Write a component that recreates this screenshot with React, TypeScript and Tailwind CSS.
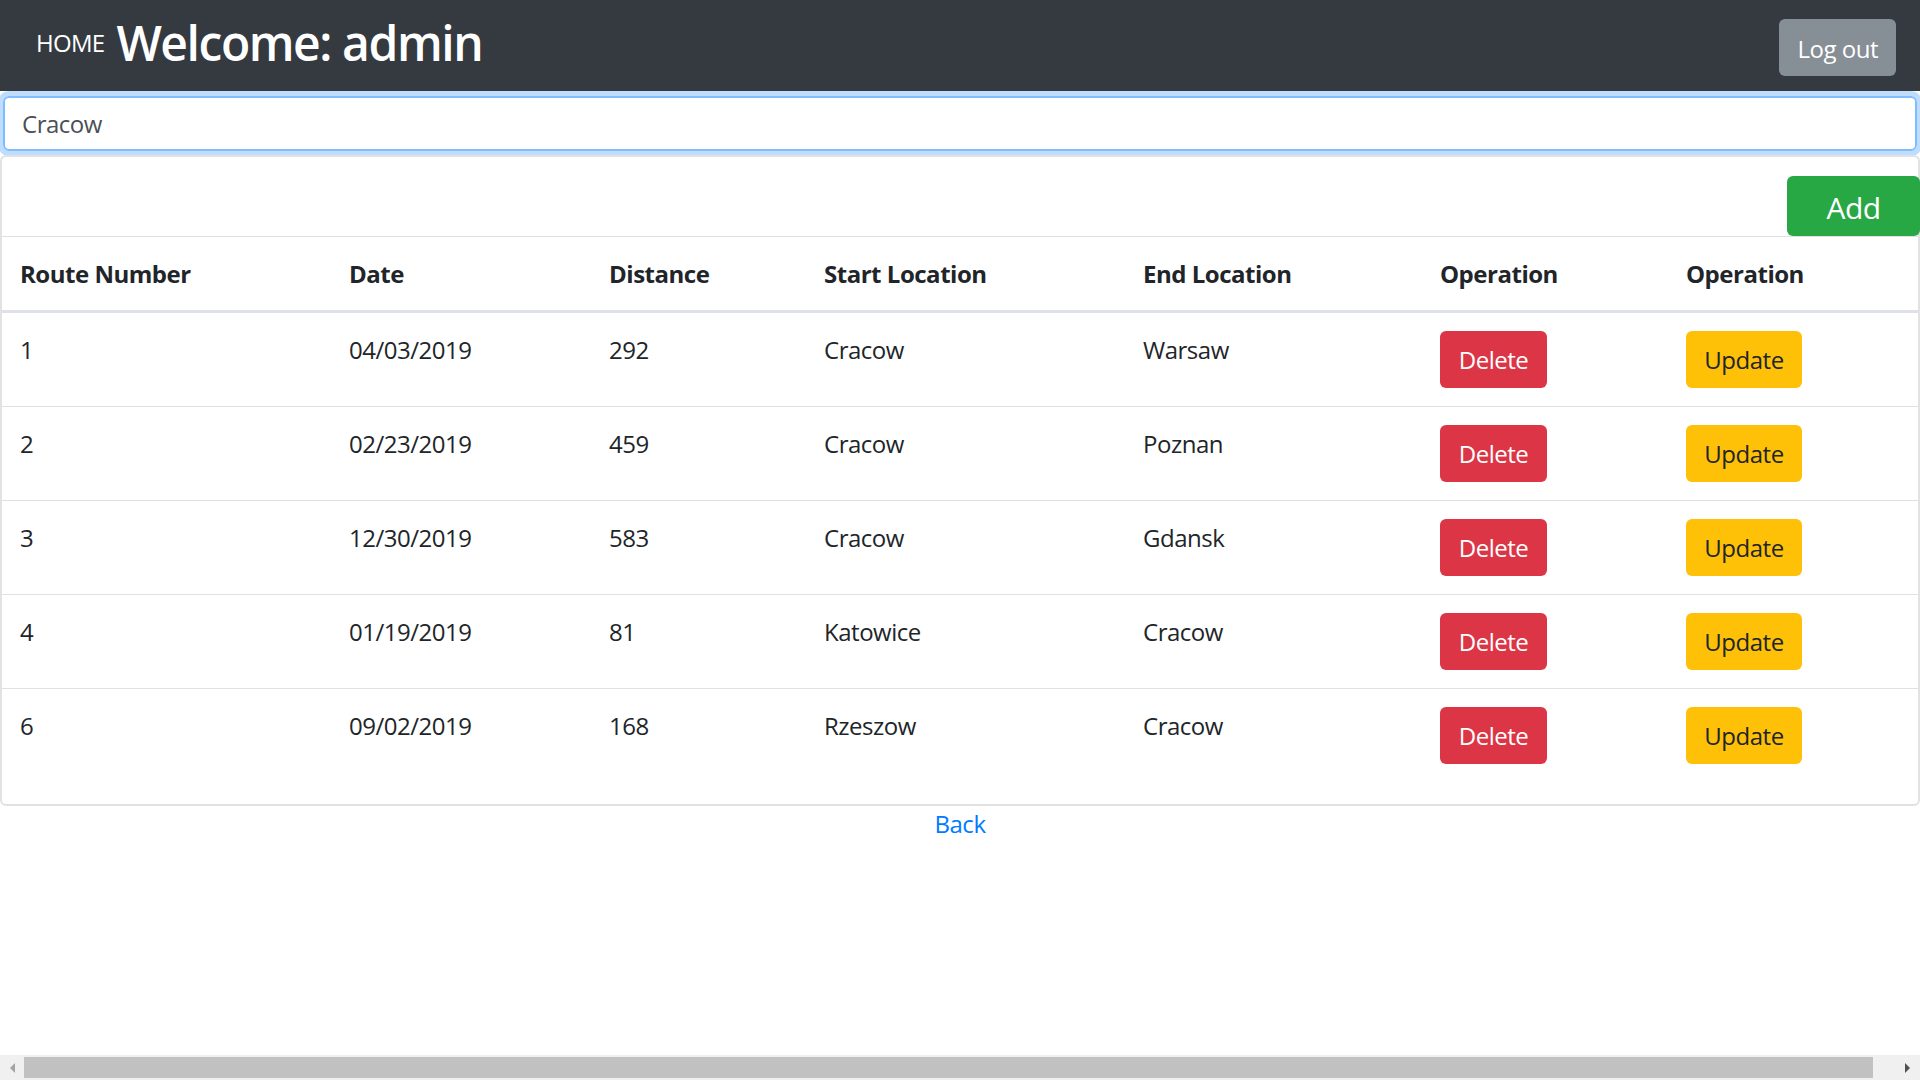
import React from 'react';

type Route = {
  id: number;
  date: string;
  distance: number;
  start: string;
  end: string;
};

const routes: Route[] = [
  { id: 1, date: '04/03/2019', distance: 292, start: 'Cracow', end: 'Warsaw' },
  { id: 2, date: '02/23/2019', distance: 459, start: 'Cracow', end: 'Poznan' },
  { id: 3, date: '12/30/2019', distance: 583, start: 'Cracow', end: 'Gdansk' },
  { id: 4, date: '01/19/2019', distance: 81, start: 'Katowice', end: 'Cracow' },
  { id: 6, date: '09/02/2019', distance: 168, start: 'Rzeszow', end: 'Cracow' },
];

const headers = ['Route Number', 'Date', 'Distance', 'Start Location', 'End Location', 'Operation', 'Operation'];
const colWidths = ['w-[329px]', 'w-[260px]', 'w-[215px]', 'w-[319px]', 'w-[297px]', 'w-[246px]', 'w-auto'];

const font = { fontFamily: '"Open Sans", "Noto Sans", Arial, sans-serif' };

export default function App() {
  return (
    <div className="h-screen flex flex-col bg-white text-[#212529] text-[24px] leading-[1.5] overflow-hidden" style={font}>
      {/* navbar */}
      <nav className="h-[91px] shrink-0 bg-[#343a40] flex items-center pl-[24px] pr-[24px]">
        <a className="px-[12px] pb-[5px] text-white text-[24px] leading-[36px] tracking-[-0.03em]">HOME</a>
        <h2 className="pb-[7px] text-white text-[48px] leading-[57px] font-semibold tracking-[-0.03em]">Welcome: admin</h2>
        <button className="ml-auto mt-[3px] h-[57px] px-[18px] pt-[3px] rounded-[6px] bg-[#868e96] text-white text-[24px] tracking-[-0.02em]">
          Log out
        </button>
      </nav>

      {/* search */}
      <div className="mt-[5px] mx-[3px]">
        <input
          defaultValue="Cracow"
          className="w-full h-[55px] px-[17px] rounded-[6px] border-2 border-[#80bdff] text-[#495057] text-[24px] tracking-[-0.02em] outline-none shadow-[0_0_0_5px_rgba(0,123,255,0.25)]"
          style={font}
        />
      </div>

      {/* card */}
      <div className="mt-[4px] border-2 border-[#e2e2e2] rounded-[6px] pb-[22px]">
        <div className="flex justify-end pt-[19px] -mr-[2px]">
          <button className="w-[133px] h-[60px] pt-[2px] rounded-[6px] bg-[#28a745] text-white text-[30px] tracking-[-0.02em]">Add</button>
        </div>
        <table className="w-full table-fixed border-collapse tracking-[-0.02em]">
          <colgroup>
            {colWidths.map((w, i) => (
              <col key={i} className={w} />
            ))}
          </colgroup>
          <thead>
            <tr className="border-t border-[#dee2e6] border-b-[3px] border-b-[#dee2e6]">
              {headers.map((h, i) => (
                <th key={i} className="text-left font-bold px-[18px] pt-[19px] pb-[18px] leading-[36px] whitespace-nowrap">
                  {h}
                </th>
              ))}
            </tr>
          </thead>
          <tbody>
            {routes.map((r) => (
              <tr key={r.id} className="border-b border-[#dee2e6] last:border-b-0 align-top">
                <td className="px-[18px] pt-[19px] pb-[17px] leading-[36px]">{r.id}</td>
                <td className="px-[18px] pt-[19px] pb-[17px] leading-[36px]">{r.date}</td>
                <td className="px-[18px] pt-[19px] pb-[17px] leading-[36px]">{r.distance}</td>
                <td className="px-[18px] pt-[19px] pb-[17px] leading-[36px]">{r.start}</td>
                <td className="px-[18px] pt-[19px] pb-[17px] leading-[36px]">{r.end}</td>
                <td className="px-[18px] py-[18px]">
                  <button className="w-[107px] h-[57px] pt-[1px] rounded-[6px] bg-[#dc3545] text-white text-[24px] tracking-[-0.02em]">Delete</button>
                </td>
                <td className="px-[18px] py-[18px]">
                  <button className="w-[116px] h-[57px] pt-[1px] rounded-[6px] bg-[#ffc107] text-[#212529] text-[24px] tracking-[-0.02em]">Update</button>
                </td>
              </tr>
            ))}
          </tbody>
        </table>
      </div>

      <div className="text-center leading-[36px]">
        <a className="text-[#007bff] tracking-[-0.02em]">Back</a>
      </div>

      {/* horizontal scrollbar */}
      <div className="mt-auto h-[25px] shrink-0 bg-[#f0f0f0] flex items-center">
        <div className="w-[24px] flex justify-center">
          <div className="w-0 h-0 border-y-[5px] border-y-transparent border-r-[5px] border-r-[#a3a3a3]" />
        </div>
        <div className="h-[21px] w-[1849px] bg-[#c1c1c1]" />
        <div className="flex-1" />
        <div className="w-[25px] flex justify-center">
          <div className="w-0 h-0 border-y-[5px] border-y-transparent border-l-[5px] border-l-[#505050]" />
        </div>
      </div>
    </div>
  );
}
